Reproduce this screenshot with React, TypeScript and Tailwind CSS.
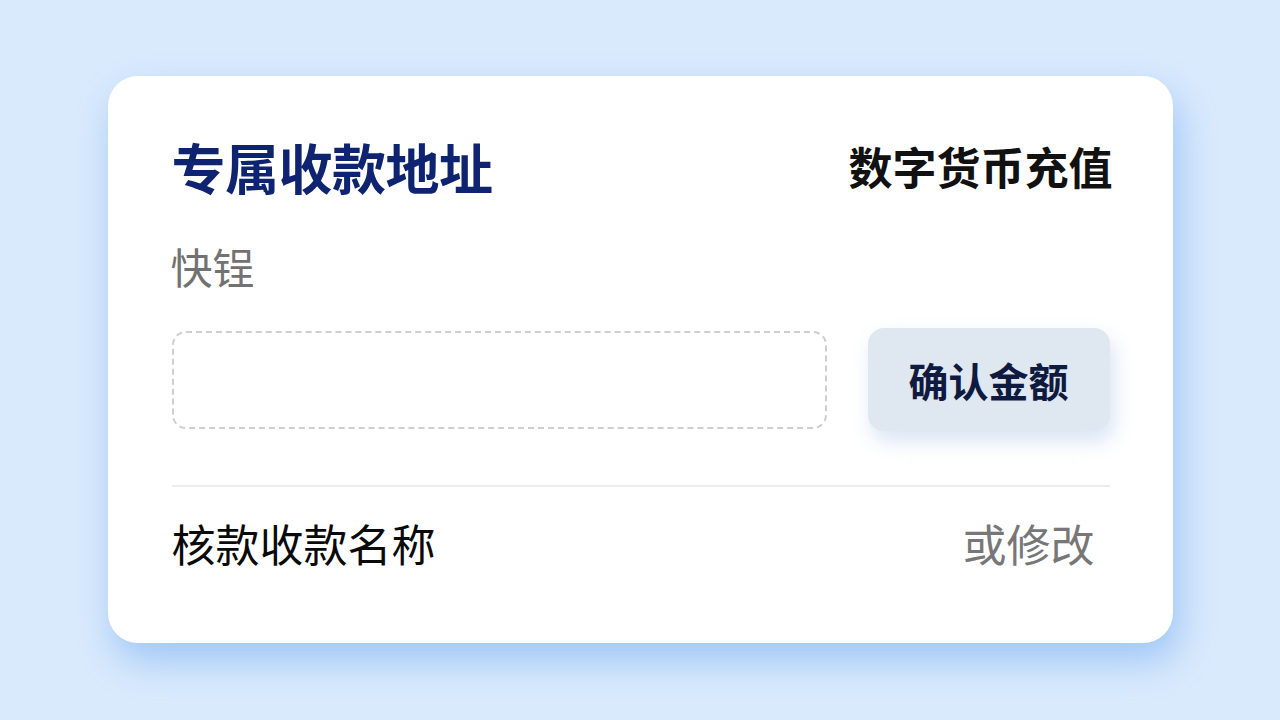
import React from "react";

const font = { fontFamily: '"Noto Sans CJK SC", "Noto Sans", sans-serif' };

export default function App() {
  return (
    <div
      className="w-[1280px] h-[720px] bg-[#d9eafc] flex items-start justify-center pt-[76px] overflow-hidden"
      style={font}
    >
      <div className="w-[1065px] h-[567px] bg-white rounded-[30px] shadow-[6px_18px_36px_rgba(140,185,245,0.75)] pl-[64px] pr-[63px] pt-[133px] flex flex-col relative">
        {/* header row */}
        <div className="absolute left-[64px] right-[60px] top-[56px] flex items-center justify-between">
          <h1 className="text-[54px] leading-[70px] font-bold text-[#0e2470] tracking-[-0.5px]">
            专属收款地址
          </h1>
          <span className="text-[44px] leading-[60px] font-bold text-[#111111] -mt-[2px]">
            数字货币充值
          </span>
        </div>

        <div className="text-[42px] leading-[60px] text-[#727272] mt-[27px] -ml-[1px]">快锃</div>

        <div className="flex items-center justify-between mt-[32px]">
          <div className="w-[655px] h-[98px] rounded-[14px] border-2 border-dashed border-[#cfcfcf]" />
          <button className="w-[242px] h-[103px] rounded-[16px] bg-[#dfe7f0] shadow-[4px_10px_20px_rgba(170,195,230,0.45)] text-[40px] font-bold text-[#0f1a40] flex items-center justify-center">
            确认金额
          </button>
        </div>

        <div className="h-[2px] bg-[#ececec] mt-[54px]" />

        <div className="flex items-center justify-between mt-[25px] pr-[15px]">
          <span className="text-[44px] leading-[62px] font-normal text-[#0a0a0a]">核款收款名称</span>
          <span className="text-[44px] leading-[62px] text-[#777777]">或修改</span>
        </div>
      </div>
    </div>
  );
}
